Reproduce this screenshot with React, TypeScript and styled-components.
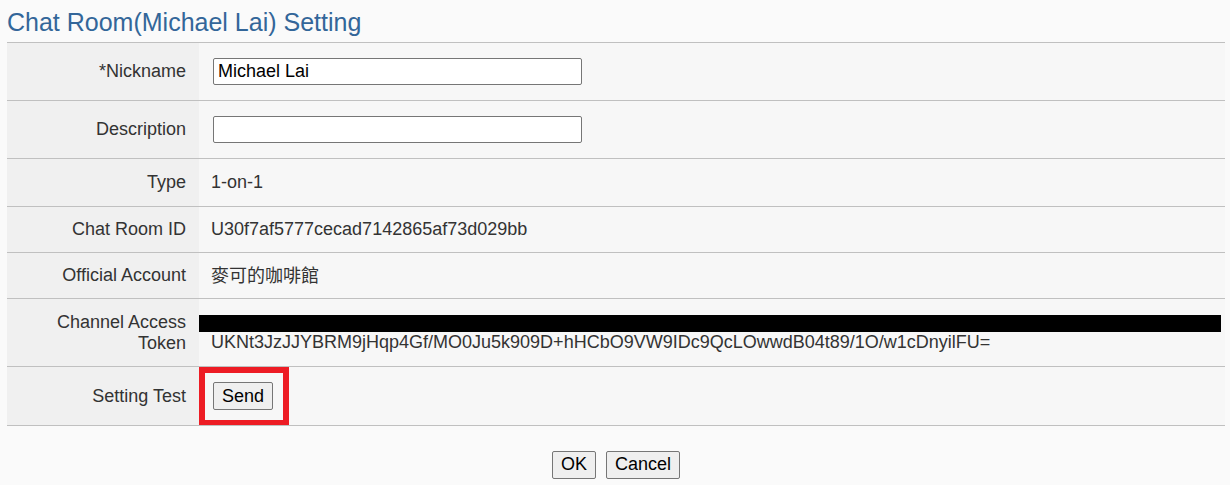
import React from "react";
import styled, { createGlobalStyle } from "styled-components";

const Global = createGlobalStyle`
  html, body { margin: 0; padding: 0; background: #fafafa; }
  body { font-family: "Liberation Sans", Arial, sans-serif; font-size: 18px; color: #333; }
`;

const Page = styled.div`
  padding: 0 5px 0 7px;
`;

const Title = styled.h1`
  margin: 0;
  padding-top: 8px;
  height: 34px;
  font-size: 25px;
  font-weight: normal;
  color: #336699;
  line-height: 28px;
  border-bottom: 1px solid #c0c0c0;
`;

const Table = styled.table`
  width: 100%;
  border-collapse: collapse;
`;

const Row = styled.tr<{ $h: number }>`
  height: ${(p) => p.$h}px;
  border-bottom: 1px solid #c0c0c0;
`;

const Label = styled.td`
  width: 179px;
  background: #f0f0f0;
  text-align: right;
  padding: 1px 13px 0 0;
  color: #333;
  line-height: 21px;
  vertical-align: middle;
`;

const Value = styled.td<{ $pad?: number }>`
  background: #f7f7f7;
  padding: 1px 0 0 ${(p) => p.$pad ?? 12}px;
  color: #333;
  line-height: 21px;
  vertical-align: middle;
`;

const TextInput = styled.input`
  box-sizing: border-box;
  width: 369px;
  height: 27px;
  margin-left: 2px;
  border: 1px solid #767676;
  border-radius: 2px;
  background: #fff;
  font-family: "Liberation Sans", Arial, sans-serif;
  font-size: 18px;
  color: #000;
  padding: 1px 4px;
`;

const CJK = styled.span`
  font-family: "Noto Sans CJK TC", "Noto Sans CJK SC", sans-serif;
  font-size: 18px;
`;

const TokenWrap = styled.div`
  display: flex;
  flex-direction: column;
`;

const Redact = styled.div`
  height: 17px;
  background: #000;
  margin-right: 4px;
  margin-top: 2px;
`;

const TokenText = styled.div`
  padding-left: 12px;
  line-height: 21px;
`;

const RedBox = styled.div`
  box-sizing: border-box;
  width: 90px;
  height: 59px;
  border: 6px solid #ed1c24;
  display: flex;
  align-items: center;
  padding-left: 8px;
  margin-bottom: -1px;
  margin-top: -1px;
`;

const Btn = styled.button`
  box-sizing: border-box;
  height: 28px;
  padding: 0 8px;
  border: 1px solid #767676;
  border-radius: 2px;
  background: #efefef;
  font-family: "Liberation Sans", Arial, sans-serif;
  font-size: 18px;
  color: #000;
`;

const Footer = styled.div`
  display: flex;
  justify-content: center;
  gap: 10px;
  padding-top: 25px;
`;

export default function App() {
  return (
    <>
      <Global />
      <Page>
        <Title>Chat Room(Michael Lai) Setting</Title>
        <Table>
          <tbody>
            <Row $h={57}>
              <Label>*Nickname</Label>
              <Value>
                <TextInput defaultValue="Michael Lai" />
              </Value>
            </Row>
            <Row $h={58}>
              <Label>Description</Label>
              <Value>
                <TextInput defaultValue="" />
              </Value>
            </Row>
            <Row $h={48}>
              <Label>Type</Label>
              <Value>1-on-1</Value>
            </Row>
            <Row $h={46}>
              <Label>Chat Room ID</Label>
              <Value>U30f7af5777cecad7142865af73d029bb</Value>
            </Row>
            <Row $h={46}>
              <Label>Official Account</Label>
              <Value>
                <CJK>麥可的咖啡館</CJK>
              </Value>
            </Row>
            <Row $h={68}>
              <Label>
                Channel Access
                <br />
                Token
              </Label>
              <Value $pad={0}>
                <TokenWrap>
                  <Redact />
                  <TokenText>
                    UKNt3JzJJYBRM9jHqp4Gf/MO0Ju5k909D+hHCbO9VW9IDc9QcLOwwdB04t89/1O/w1cDnyilFU=
                  </TokenText>
                </TokenWrap>
              </Value>
            </Row>
            <Row $h={58}>
              <Label>Setting Test</Label>
              <Value $pad={0}>
                <RedBox>
                  <Btn>Send</Btn>
                </RedBox>
              </Value>
            </Row>
          </tbody>
        </Table>
        <Footer>
          <Btn>OK</Btn>
          <Btn>Cancel</Btn>
        </Footer>
      </Page>
    </>
  );
}
